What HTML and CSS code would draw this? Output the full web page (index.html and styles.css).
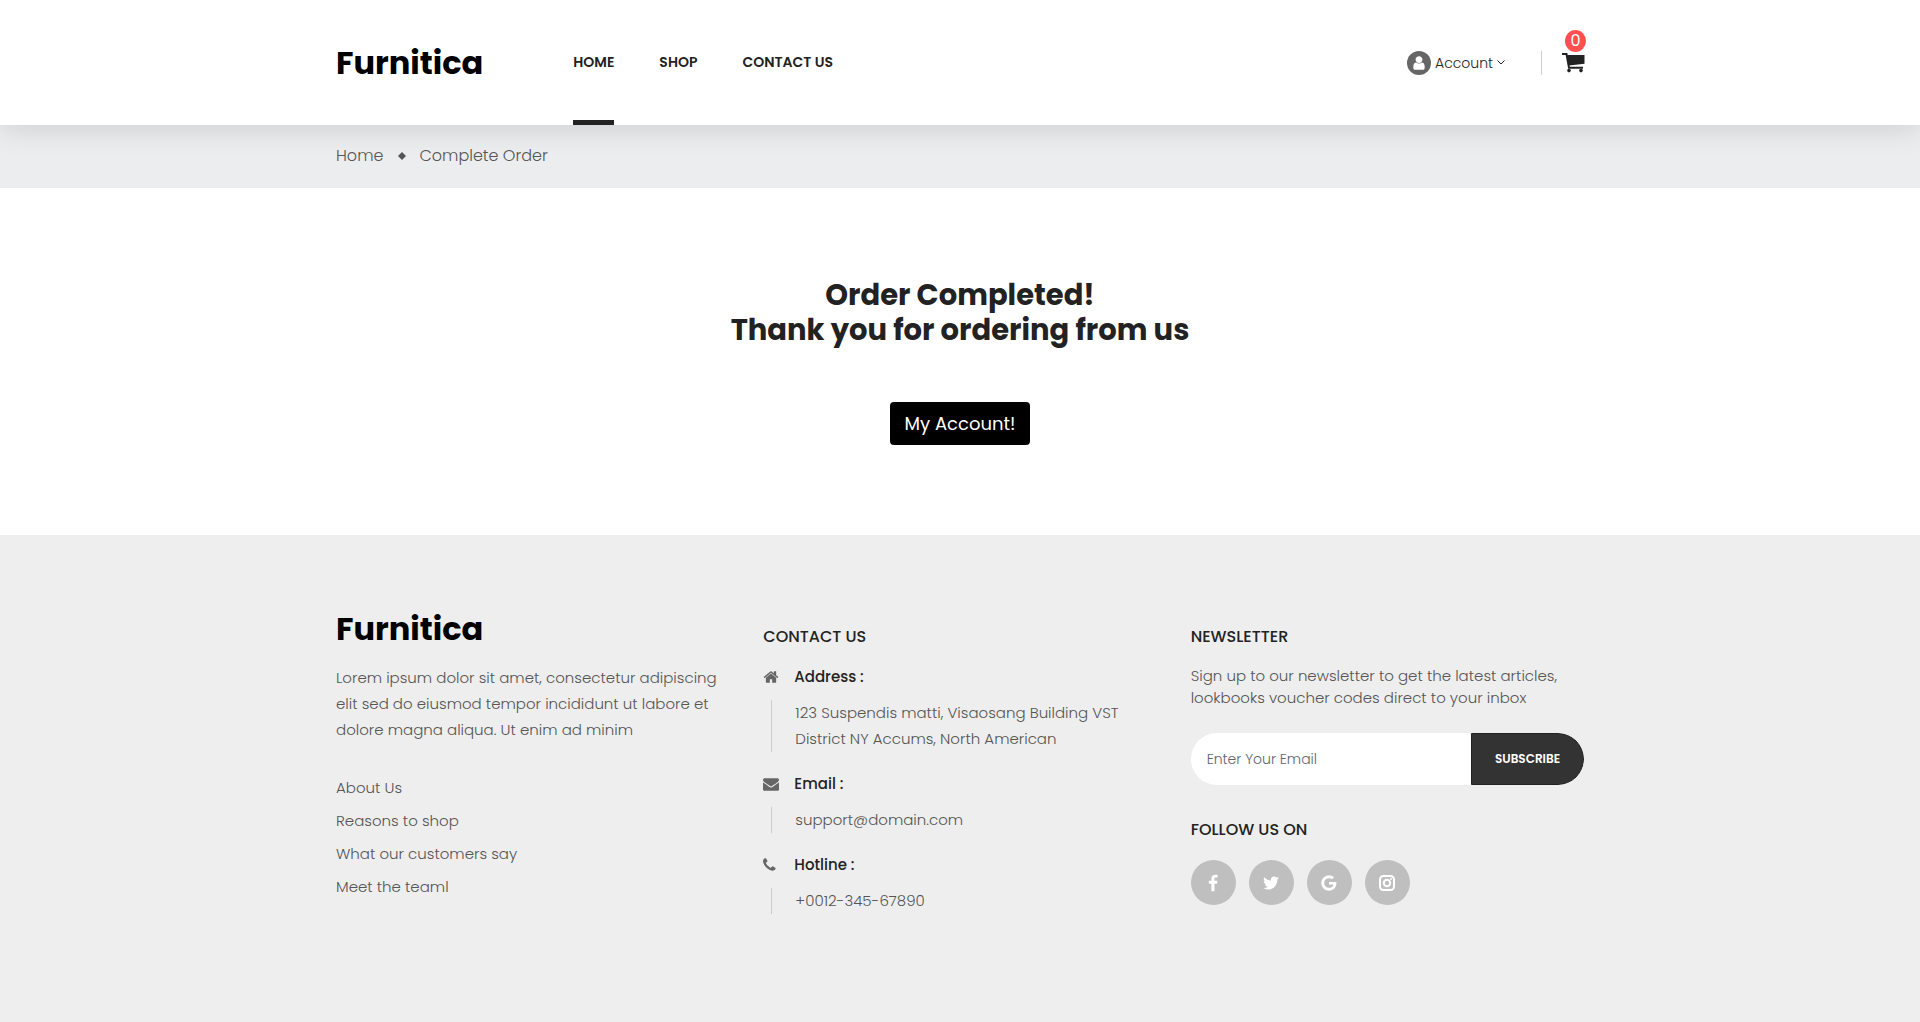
FILE: index.html
```html
<!DOCTYPE html>
<html lang="en">
<head>
  <meta charset="utf-8">
  <meta name="viewport" content="width=device-width, initial-scale=1">
  <title>Furnitica - Complete Order</title>
  <link rel="stylesheet" href="styles.css">
</head>
<body>
  <header class="site-header">
    <div class="container header-row">
      <a class="logo" href="#">Furnitica</a>
      <nav class="main-nav" aria-label="Main">
        <a class="active" href="#">HOME</a>
        <a href="#">SHOP</a>
        <a href="#">CONTACT US</a>
      </nav>
      <div class="header-tools">
        <button class="account" type="button">
          <span class="avatar"><svg viewBox="0 0 1792 1792" aria-hidden="true"><path d="M1536 1399q0 109-62.500 187t-150.500 78h-854q-88 0-150.500-78t-62.500-187q0-85 8.500-160.500t31.500-152 58.500-131 94-89 134.500-34.500q131 128 313 128t313-128q76 0 134.500 34.500t94 89 58.500 131 31.500 152 8.500 160.500zm-256-887q0 159-112.500 271.500t-271.500 112.500-271.500-112.500-112.500-271.500 112.500-271.500 271.500-112.500 271.500 112.500 112.500 271.500z"/></svg></span>
          Account
          <svg class="caret" viewBox="0 0 8 5" aria-hidden="true"><path d="M.5.5 4 4 7.500.5"/></svg>
        </button>
        <a class="cart" href="#" aria-label="Cart">
          <svg viewBox="0 0 23 20" aria-hidden="true"><path class="frame" d="M0 1h4.500L7 14.800H21"/><path d="M5 2h17.500v8.700L7 12.500z"/><circle cx="7" cy="17.600" r="1.800"/><circle cx="19" cy="17.600" r="1.800"/></svg>
          <span class="badge">0</span>
        </a>
      </div>
    </div>
  </header>

  <nav class="breadcrumb" aria-label="Breadcrumb">
    <div class="container crumbs">
      <a href="#">Home</a>
      <svg viewBox="0 0 8 8" aria-hidden="true"><path d="M4 0l4 4-4 4-4-4z"/></svg>
      <a href="#">Complete Order</a>
    </div>
  </nav>

  <main class="order-done">
    <h1>Order Completed!<br>Thank you for ordering from us</h1>
    <button class="btn-account" type="button">My Account!</button>
  </main>

  <footer class="site-footer">
    <div class="container footer-grid">
      <section class="about">
        <a class="logo" href="#">Furnitica</a>
        <p>Lorem ipsum dolor sit amet, consectetur adipiscing<br>elit sed do eiusmod tempor incididunt ut labore et<br>dolore magna aliqua. Ut enim ad minim</p>
        <ul>
          <li><a href="#">About Us</a></li>
          <li><a href="#">Reasons to shop</a></li>
          <li><a href="#">What our customers say</a></li>
          <li><a href="#">Meet the teaml</a></li>
        </ul>
      </section>

      <section class="contact">
        <h2>CONTACT US</h2>
        <h3><svg viewBox="0 0 1792 1792" aria-hidden="true"><path d="M1472 992v480q0 26-19 45t-45 19h-384v-384h-256v384h-384q-26 0-45-19t-19-45v-480q0-1 .5-3t.5-3l575-474 575 474q1 2 1 6zm223-69l-62 74q-8 9-21 11h-3q-13 0-21-7l-692-577-692 577q-12 8-24 7-13-2-21-11l-62-74q-8-10-7-23.500t11-21.500l719-599q32-26 76-26t76 26l244 204v-195q0-14 9-23t23-9h192q14 0 23 9t9 23v408l219 182q10 8 11 21.500t-7 23.500z"/></svg>Address :</h3>
        <p>123 Suspendis matti, Visaosang Building VST<br>District NY Accums, North American</p>
        <h3><svg viewBox="0 0 1792 1792" aria-hidden="true"><path d="M1792 710v794q0 66-47 113t-113 47h-1472q-66 0-113-47t-47-113v-794q44 49 101 87 362 246 497 345 57 42 92.500 65.500t94.500 48 110 24.500h2q51 0 110-24.500t94.500-48 92.500-65.500q170-123 498-345 57-39 100-87zm0-294q0 79-49 151t-122 123q-376 261-468 325-10 7-42.500 31t-54 38.500-52 32.500-57.500 27-50 9h-2q-23 0-50-9t-57.500-27-52-32.500-54-38.500-42.500-31q-91-64-262-182.500t-205-142.500q-62-42-117-115.500t-55-136.500q0-78 41.500-130t118.500-52h1472q65 0 112.500 47t47.500 113z"/></svg>Email :</h3>
        <p>support@domain.com</p>
        <h3><svg viewBox="192 0 1792 1792" aria-hidden="true"><path d="M1600 1240q0 27-10 70.500t-21 68.500q-21 50-122 106-94 51-186 51-27 0-53-3.500t-57.500-12.500-47-14.500-55.500-20.500-49-18q-98-35-175-83-127-79-264-216t-216-264q-48-77-83-175-3-9-18-49t-20.500-55.500-14.500-47-12.500-57.500-3.500-53q0-92 51-186 56-101 106-122 25-11 68.500-21t70.500-10q14 0 21 3 18 6 53 76 11 19 30 54t35 63.500 31 53.500q3 4 17.500 25t21.500 35.500 7 28.500q0 20-28.500 50t-62 55-62 53-28.500 46q0 9 5 22.500t8.500 20.500 14 24 11.500 19q76 137 174 235t235 174q2 1 19 11.500t24 14 20.500 8.500 22.500 5q18 0 46-28.500t53-62 55-62 50-28.500q14 0 28.500 7t35.500 21.500 25 17.500q25 15 53.500 31t63.500 35 54 30q70 35 76 53 3 7 3 21z"/></svg>Hotline :</h3>
        <p>+0012-345-67890</p>
      </section>

      <section class="newsletter">
        <h2>NEWSLETTER</h2>
        <p>Sign up to our newsletter to get the latest articles,<br>lookbooks voucher codes direct to your inbox</p>
        <form class="subscribe">
          <input type="email" placeholder="Enter Your Email" aria-label="Enter Your Email">
          <button type="button">SUBSCRIBE</button>
        </form>
        <h2>FOLLOW US ON</h2>
        <div class="social">
          <a href="#" aria-label="Facebook"><svg viewBox="0 -64 1792 1792" aria-hidden="true"><path d="M1343 12v264h-157q-86 0-116 36t-30 108v189h293l-39 296h-254v759h-306v-759h-255v-296h255v-218q0-186 104-288.500t277-102.500q147 0 228 12z"/></svg></a>
          <a href="#" aria-label="Twitter"><svg viewBox="0 0 1792 1792" aria-hidden="true"><path d="M1684 408q-67 98-162 167 1 14 1 42 0 130-38 259.500t-115.500 248.500-184.500 210.500-258 146-323 54.500q-271 0-496-145 35 4 78 4 225 0 401-138-105-2-188-64.500t-114-159.500q33 5 61 5 43 0 85-11-112-23-185.500-111.500t-73.500-205.500v-4q68 38 146 41-66-44-105-115t-39-154q0-88 44-163 121 149 294.500 238.500t371.500 99.500q-8-38-8-74 0-134 94.500-228.500t228.500-94.500q140 0 236 102 109-21 205-78-37 115-142 178 93-10 186-50z"/></svg></a>
          <a href="#" aria-label="Google"><svg viewBox="0 0 1792 1792" aria-hidden="true"><path d="M896 786h725q12 67 12 128 0 217-91 387.500t-259.500 266.500-386.500 96q-157 0-299-60.500t-245-163.500-163.500-245-60.500-299 60.500-299 163.500-245 245-163.500 299-60.500q300 0 515 201l-209 201q-123-119-306-119-129 0-238.500 65t-173.500 176.500-64 243.500 64 243.500 173.500 176.500 238.500 65q87 0 160-24t120-60 82-82 51.500-87 22.500-78h-436v-264z"/></svg></a>
          <a href="#" aria-label="Instagram"><svg class="outline" viewBox="0 0 18 18" aria-hidden="true"><rect x="2" y="2" width="14" height="14" rx="3.500"/><circle cx="9" cy="9" r="3.200"/><circle class="dot" cx="13" cy="5" r="1"/></svg></a>
        </div>
      </section>
    </div>
  </footer>
</body>
</html>
```
FILE: styles.css
```css
* { box-sizing: border-box; }

body {
  margin: 0;
  min-height: 100vh;
  display: flex;
  flex-direction: column;
  background: #fff;
  color: #555;
  font-family: Poppins, Inter, sans-serif;
  font-size: 15px;
  font-weight: 300;
  line-height: 26px;
}

a { color: inherit; text-decoration: none; }
h1, h2, h3, p, ul { margin: 0; padding: 0; }
ul { list-style: none; }
button, input { font: inherit; border: 0; padding: 0; margin: 0; background: none; }
button { cursor: pointer; }
svg { fill: currentColor; flex: none; }

.container {
  width: 100%;
  max-width: 1288px;
  margin: 0 auto;
  padding: 0 20px;
}

.logo {
  display: block;
  color: #000;
  font-size: 32px;
  font-weight: 700;
  line-height: 40px;
}

/* Header */
.site-header {
  position: relative;
  background: #fff;
  box-shadow: 0 0 30px rgba(0, 0, 0, .16);
}
.header-row { display: flex; height: 125px; align-items: center; }
.main-nav {
  display: flex;
  align-self: stretch;
  gap: 45px;
  margin-left: 90px;
  color: #222;
  font-size: 14px;
  font-weight: 600;
}
.main-nav a {
  display: flex;
  align-items: center;
  padding-top: 4px;
  border-bottom: 5px solid transparent;
}
.main-nav .active { border-bottom-color: #222; }
.header-tools { display: flex; align-items: center; margin-left: auto; }
.account { display: flex; align-items: center; gap: 4px; color: #222; font-size: 14px; }
.avatar {
  display: grid;
  place-items: center;
  width: 24px;
  height: 24px;
  border-radius: 50%;
  background: #666;
  color: #fff;
}
.avatar svg { width: 16px; height: 16px; }
.caret { width: 8px; height: 5px; fill: none; stroke: currentColor; }
.cart {
  position: relative;
  display: flex;
  margin-left: 36px;
  margin-right: -1px;
  padding: 2px 0 2px 20px;
  border-left: 1px solid #ccc;
  color: #222;
}
.cart svg { width: 23px; height: 20px; }
.cart .frame { fill: none; stroke: currentColor; stroke-width: 2; }
.badge {
  position: absolute;
  right: -1px;
  bottom: 23px;
  width: 21px;
  height: 22px;
  border-radius: 50%;
  background: #ff5050;
  color: #fff;
  font-size: 16px;
  font-weight: 400;
  line-height: 22px;
  text-align: center;
}

/* Breadcrumb */
.breadcrumb { background: #ebedee; }
.crumbs { display: flex; align-items: center; height: 63px; padding-bottom: 2px; font-size: 16px; }
.crumbs svg { width: 8px; height: 8px; margin: 0 13px 0 15px; }

/* Order message */
.order-done {
  display: flex;
  flex-direction: column;
  align-items: center;
  gap: 54px;
  padding: 90px 20px;
  text-align: center;
}
.order-done h1 { color: #222; font-size: 29px; font-weight: 700; line-height: 35px; }
.btn-account {
  padding: 8px 15px;
  border-radius: 4px;
  background: #000;
  color: #fff;
  font-size: 18px;
  font-weight: 400;
  line-height: 27px;
}

/* Footer */
.site-footer { flex: 1; padding: 74px 0; background: #eee; }
.footer-grid {
  display: grid;
  grid-template-columns: repeat(3, minmax(0, 1fr));
  gap: 34px;
}
.about p { margin: 16px 0 28px; }
.about li { line-height: 33px; }

.contact, .newsletter { padding-top: 15px; }
h2 { color: #222; font-size: 16px; font-weight: 500; line-height: 26px; }
h3 {
  display: flex;
  align-items: center;
  gap: 15px;
  margin-top: 21px;
  color: #222;
  font-size: 15px;
  font-weight: 500;
  line-height: 22px;
}
.contact h2 + h3 { margin-top: 16px; }
h3 svg { width: 16px; height: 16px; color: #666; }
.contact p { margin: 12px 0 0 8px; padding-left: 23px; border-left: 1px solid #ccc; }

.newsletter p { margin-top: 15px; line-height: 22px; }
.subscribe {
  display: flex;
  height: 52px;
  margin: 24px 0 32px;
  border-radius: 26px;
  overflow: hidden;
}
.subscribe input { flex: 1; min-width: 0; padding: 0 16px; background: #fff; color: #444; font-size: 14px; }
.subscribe input::placeholder { color: #5c656d; }
.subscribe button {
  width: 113px;
  border: 1px solid #222;
  border-radius: 0 26px 26px 0;
  background: #333;
  color: #fff;
  font-size: 12px;
  font-weight: 600;
}
.social { display: flex; gap: 13px; margin-top: 17px; }
.social a {
  display: grid;
  place-items: center;
  width: 45px;
  height: 45px;
  border-radius: 50%;
  background: #bfbfbf;
  color: #fff;
}
.social svg { width: 18px; height: 18px; }
.social .outline { fill: none; stroke: currentColor; stroke-width: 2; }
.social .dot { fill: currentColor; stroke: none; }
```
